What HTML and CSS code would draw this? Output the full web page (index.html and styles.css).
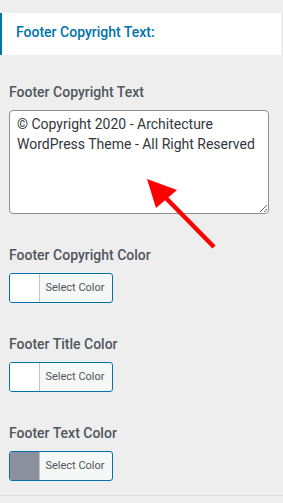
FILE: index.html
```html
<!DOCTYPE html>
<html lang="en">
<head>
    <meta charset="UTF-8">
    <meta name="viewport" content="width=device-width, initial-scale=1.0">
    <title>Footer Settings</title>
    <link rel="stylesheet" href="styles.css">
</head>
<body>
    <div class="panel">
        <div class="section-title">Footer Copyright Text:</div>

        <div class="controls">
            <div class="control">
                <label for="copyText">Footer Copyright Text</label>
                <textarea id="copyText" class="textarea">© Copyright 2020 - Architecture WordPress Theme - All Right Reserved</textarea>
            </div>

            <div class="control">
                <label>Footer Copyright Color</label>
                <button class="color-btn">
                    <span class="swatch"></span>
                    <span class="select">Select Color</span>
                </button>
            </div>

            <div class="control">
                <label>Footer Title Color</label>
                <button class="color-btn">
                    <span class="swatch"></span>
                    <span class="select">Select Color</span>
                </button>
            </div>

            <div class="control">
                <label>Footer Text Color</label>
                <button class="color-btn">
                    <span class="swatch" style="background: #8c909d;"></span>
                    <span class="select">Select Color</span>
                </button>
            </div>
        </div>

        <div class="divider"></div>

        <!-- annotation arrow -->
        <svg class="arrow" width="283" height="503" viewBox="0 0 283 503">
            <line x1="214" y1="247" x2="163" y2="195" stroke="#ff0000" stroke-width="4.5"/>
            <polygon points="147,179 177,190 156,208" fill="#ff0000"/>
        </svg>
    </div>
</body>
</html>
```

FILE: styles.css
```css
* {
    margin: 0;
    padding: 0;
    box-sizing: border-box;
}

body {
    font-family: Roboto, 'Noto Sans', sans-serif;
    background: #eeeeee;
    color: #50575e;
    width: 283px;
    height: 503px;
    overflow: hidden;
}

.panel {
    position: relative;
    padding-top: 13px;
}

.section-title {
    background: #fff;
    border-left: 2px solid #0073aa;
    margin-right: 2px;
    height: 42px;
    padding: 9px 14px 0;
    font-size: 14px;
    line-height: 20px;
    font-weight: 500;
    color: #0073aa;
}

.controls {
    padding: 27px 9px 0;
    display: flex;
    flex-direction: column;
    gap: 31px;
}

.control label {
    display: block;
    font-size: 14px;
    line-height: 20px;
    font-weight: 500;
    color: #50575e;
    margin-bottom: 8px;
}

.textarea {
    display: block;
    width: 260px;
    height: 104px;
    border: 1px solid #8c8f94;
    border-radius: 4px;
    background: #fff;
    padding: 3px 7px;
    font-family: Roboto, 'Noto Sans', sans-serif;
    font-size: 14px;
    line-height: 20px;
    color: #32373c;
    resize: vertical;
}

.color-btn {
    display: flex;
    width: 104px;
    height: 30px;
    border: 1px solid #0073aa;
    border-radius: 3px;
    overflow: hidden;
    background: #f6f7f7;
    font-family: Roboto, 'Noto Sans', sans-serif;
}

.swatch {
    width: 30px;
    height: 100%;
    background: #fff;
    border-right: 1px solid #c3c4c7;
}

.select {
    flex: 1;
    font-size: 11px;
    line-height: 28px;
    color: #50575e;
    text-align: center;
    padding-right: 2px;
}

.divider {
    margin-top: 14px;
    height: 1px;
    background: #dcdcde;
}

.arrow {
    position: absolute;
    top: 0;
    left: 0;
    pointer-events: none;
}
```
